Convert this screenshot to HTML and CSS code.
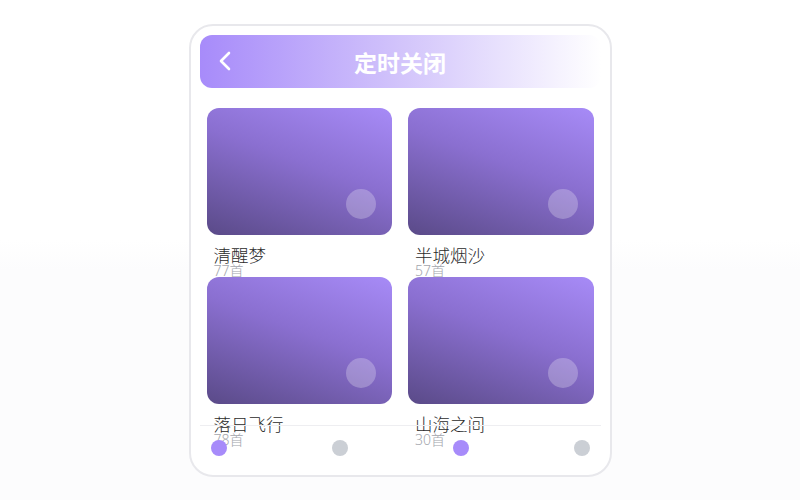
FILE: index.html
```html
<!DOCTYPE html>
<html lang="zh-CN">
<head>
  <meta charset="UTF-8" />
  <meta name="viewport" content="width=device-width, initial-scale=1.0" />
  <title>定时关闭</title>
  <link rel="stylesheet" href="styles.css">
</head>
<body>

  <div class="phone">
    <div class="topbar">
      <span class="back">
        <svg width="14" height="20" viewBox="0 0 14 20" fill="none">
          <path d="M11 2 L3 10 L11 18" stroke="#fff" stroke-width="2.6" stroke-linecap="round" stroke-linejoin="round"/>
        </svg>
      </span>
      <h2>定时关闭</h2>
    </div>

    <div class="album-grid">
      <div class="album">
        <div class="cover"><span class="play"></span></div>
        <div class="album-name">清醒梦</div>
        <div class="album-count">77首</div>
      </div>
      <div class="album">
        <div class="cover"><span class="play"></span></div>
        <div class="album-name">半城烟沙</div>
        <div class="album-count">57首</div>
      </div>
      <div class="album">
        <div class="cover"><span class="play"></span></div>
        <div class="album-name">落日飞行</div>
        <div class="album-count">78首</div>
      </div>
      <div class="album">
        <div class="cover"><span class="play"></span></div>
        <div class="album-name">山海之间</div>
        <div class="album-count">30首</div>
      </div>
    </div>

    <div class="tabbar">
      <span class="dot active"></span>
      <span class="dot"></span>
      <span class="dot active"></span>
      <span class="dot"></span>
    </div>
  </div>

</body>
</html>
```

FILE: styles.css
```css
body {
  margin: 0;
  min-height: 500px;
  font-family: "Noto Sans", "Noto Sans CJK SC", sans-serif;
  background: linear-gradient(#ffffff 0, #ffffff 240px, #fcfcfd 270px);
}
.phone {
  position: relative;
  box-sizing: border-box;
  width: 423px;
  height: 453px;
  margin: 24px auto 0;
  padding: 9px;
  background: #fff;
  border: 2px solid #e8e8ec;
  border-radius: 24px;
  overflow: hidden;
}
.topbar {
  position: relative;
  height: 53px;
  border-radius: 12px;
  background: linear-gradient(90deg, #a78bfa 0%, #d2c4fb 50%, #ffffff 100%);
  display: flex;
  align-items: center;
  justify-content: center;
}
.topbar h2 {
  margin: 0;
  color: #fff;
  font-size: 23px;
  font-weight: 700;
}
.back {
  position: absolute;
  left: 18px;
  top: 16px;
  display: flex;
}
.album-grid {
  display: grid;
  grid-template-columns: 1fr 1fr;
  column-gap: 16px;
  padding: 0 7px;
  margin-top: 20px;
}
.album {
  height: 169px;
}
.cover {
  position: relative;
  height: 127px;
  border-radius: 12px;
  background: linear-gradient(200deg, #a78bf7 0%, #8a6fd0 45%, #5a4a88 100%);
}
.play {
  position: absolute;
  right: 16px;
  bottom: 16px;
  width: 30px;
  height: 30px;
  border-radius: 50%;
  background: rgba(255, 255, 255, 0.25);
}
.album-name {
  margin-top: 10px;
  padding-left: 7px;
  font-size: 17.5px;
  font-weight: 300;
  line-height: 20px;
  color: #2b2b2b;
}
.album-count {
  padding-left: 7px;
  font-size: 14px;
  font-weight: 300;
  line-height: 12px;
  color: #a3a6ad;
}
.tabbar {
  position: absolute;
  left: 9px;
  right: 9px;
  bottom: 0;
  height: 50px;
  box-sizing: border-box;
  padding: 14px 11px 0;
  border-top: 1px solid #eeeef1;
  display: flex;
  justify-content: space-between;
  align-items: flex-start;
}
.dot {
  width: 16px;
  height: 16px;
  border-radius: 50%;
  background: #cbcfd5;
}
.dot.active {
  background: #a78bfa;
}
```
